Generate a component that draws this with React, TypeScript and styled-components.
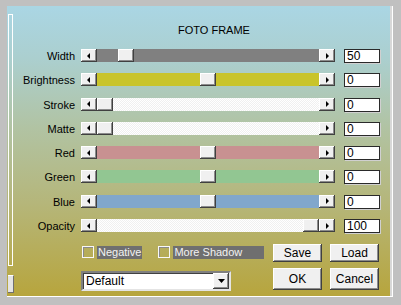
import React from 'react';
import styled, { createGlobalStyle, css } from 'styled-components';

const GlobalStyle = createGlobalStyle`
  html, body {
    margin: 0;
    padding: 0;
    overflow: hidden;
    background: #c0c0c0;
  }
  * {
    box-sizing: border-box;
  }
`;

const raised = css`
  background: #f0f0f0;
  box-shadow: inset -1px -1px 0 #404040, inset 1px 1px 0 #ffffff, inset -2px -2px 0 #8c8c8c;
`;

const Window = styled.div`
  width: 401px;
  height: 305px;
  background: #c0c0c0;
  padding: 6px 8px 8px 7px;
  display: flex;
  font-family: 'Liberation Sans', Arial, sans-serif;
  font-size: 11px;
  color: #000;
`;

const Inner = styled.div`
  flex: 1;
  display: flex;
  background: linear-gradient(to bottom, #aad6e4 0%, #abcfcf 18%, #b1c3a3 42%, #b5b67a 68%, #b7a53d 100%);
  border-right: 1px solid #ffffff;
  border-bottom: 1px solid #ffffff;
  box-shadow: inset -2px 0 0 #d8d8d8;
`;

const Rail = styled.div`
  width: 5px;
  margin-left: 1px;
  display: flex;
  flex-direction: column;
`;

const RailPanel = styled.div`
  margin-top: 8px;
  height: 252px;
  border: 1px solid #ffffff;
`;

const RailBox = styled.div`
  margin-top: 9px;
  height: 18px;
  width: 6px;
  background: #e4e4e4;
  border-top: 1px solid #ffffff;
  border-right: 1px solid #707070;
  border-bottom: 1px solid #707070;
`;

const Main = styled.div`
  flex: 1;
  display: flex;
  flex-direction: column;
  padding-top: 18px;
`;

const Title = styled.div`
  line-height: 13px;
  height: 13px;
  padding-left: 165px;
`;

const Sliders = styled.div`
  margin-top: 12px;
  display: flex;
  flex-direction: column;
  gap: 10.3px;
`;

const Row = styled.div`
  display: flex;
  align-items: flex-start;
  height: 14px;
`;

const Label = styled.div`
  width: 62px;
  text-align: right;
  line-height: 14px;
  white-space: nowrap;
`;

const ScrollBar = styled.div`
  margin-left: 6px;
  width: 254px;
  height: 13px;
  display: flex;
`;

const ArrowButton = styled.div`
  ${raised};
  width: 16px;
  height: 13px;
  flex: none;
  display: flex;
  align-items: center;
  justify-content: center;
`;

const Arrow = styled.div<{ $dir: 'left' | 'right' }>`
  width: 0;
  height: 0;
  border-top: 3px solid transparent;
  border-bottom: 3px solid transparent;
  ${(p) =>
    p.$dir === 'left'
      ? css`border-right: 3px solid #000; margin-right: 1px;`
      : css`border-left: 3px solid #000; margin-left: 1px;`}
`;

const Track = styled.div<{ $fill?: string }>`
  flex: 1;
  height: 13px;
  display: flex;
  ${(p) =>
    p.$fill
      ? css`background: ${p.$fill};`
      : css`background: repeating-conic-gradient(#ffffff 0 25%, #f0f0f0 0 50%) 0 0 / 2px 2px;`}
`;

const Thumb = styled.div`
  ${raised};
  width: 16px;
  height: 13px;
  flex: none;
`;

const ValueBox = styled.div`
  margin-left: 9px;
  width: 36px;
  height: 14px;
  background: #ffffff;
  border: 1px solid #2a2a2a;
  box-shadow: 1px 1px 0 #d0d0d0;
  font-size: 12px;
  line-height: 12px;
  padding-left: 2px;
`;

const Bottom = styled.div`
  margin-top: 11px;
  padding-left: 68px;
  display: grid;
  grid-template-columns: 184px 49px 49px;
  grid-template-rows: 18px 22px;
  column-gap: 8px;
  row-gap: 6px;
`;

const Checks = styled.div`
  display: flex;
  align-items: center;
  padding-left: 1px;
  height: 14px;
  margin-top: 1px;
`;

const Check = styled.div`
  display: flex;
  align-items: center;
  & + & {
    margin-left: 16px;
  }
`;

const Box = styled.div`
  width: 12px;
  height: 12px;
  border: 1px solid #f8f8f8;
  box-shadow: inset 1px 1px 0 #8a8a8a;
`;

const CheckLabel = styled.div<{ $width?: number }>`
  margin-left: 3px;
  height: 13px;
  line-height: 13px;
  padding: 0 1px;
  background: #6f6f6f;
  color: #f2f2f2;
  white-space: nowrap;
  ${(p) => p.$width && css`width: ${p.$width}px;`}
`;

const Button = styled.div`
  ${raised};
  display: flex;
  align-items: center;
  justify-content: center;
  font-size: 12px;
`;

const Combo = styled.div`
  margin-top: 3px;
  width: 150px;
  height: 20px;
  background: #ffffff;
  border: 2px solid;
  border-color: #808080 #e4e4e4 #e4e4e4 #808080;
  box-shadow: inset 1px 1px 0 #404040;
  display: flex;
  align-items: center;
  font-size: 12px;
  padding-left: 3px;
`;

const ComboText = styled.div`
  flex: 1;
`;

const ComboButton = styled.div`
  ${raised};
  width: 16px;
  height: 16px;
  display: flex;
  align-items: center;
  justify-content: center;
`;

type SliderRow = { label: string; value: string; pos: number; fill?: string };

const rows: SliderRow[] = [
  { label: 'Width', value: '50', pos: 21, fill: '#808080' },
  { label: 'Brightness', value: '0', pos: 103, fill: '#c9c42b' },
  { label: 'Stroke', value: '0', pos: 0 },
  { label: 'Matte', value: '0', pos: 0 },
  { label: 'Red', value: '0', pos: 103, fill: '#c89191' },
  { label: 'Green', value: '0', pos: 103, fill: '#92c692' },
  { label: 'Blue', value: '0', pos: 103, fill: '#81a7cb' },
  { label: 'Opacity', value: '100', pos: 206 },
];

export default function App() {
  return (
    <>
      <GlobalStyle />
      <Window>
        <Inner>
          <Rail>
            <RailPanel />
            <RailBox />
          </Rail>
          <Main>
            <Title>FOTO FRAME</Title>
            <Sliders>
              {rows.map((r) => (
                <Row key={r.label}>
                  <Label>{r.label}</Label>
                  <ScrollBar>
                    <ArrowButton>
                      <Arrow $dir="left" />
                    </ArrowButton>
                    <Track $fill={r.fill}>
                      <Thumb style={{ marginLeft: r.pos }} />
                    </Track>
                    <ArrowButton>
                      <Arrow $dir="right" />
                    </ArrowButton>
                  </ScrollBar>
                  <ValueBox>{r.value}</ValueBox>
                </Row>
              ))}
            </Sliders>
            <Bottom>
              <Checks>
                <Check>
                  <Box />
                  <CheckLabel>Negative</CheckLabel>
                </Check>
                <Check>
                  <Box />
                  <CheckLabel $width={91}>More Shadow</CheckLabel>
                </Check>
              </Checks>
              <Button>Save</Button>
              <Button>Load</Button>
              <Combo>
                <ComboText>Default</ComboText>
                <ComboButton>
                  <svg width="7" height="4" viewBox="0 0 7 4">
                    <polygon points="0,0 7,0 3.5,4" fill="#000" />
                  </svg>
                </ComboButton>
              </Combo>
              <Button>OK</Button>
              <Button>Cancel</Button>
            </Bottom>
          </Main>
        </Inner>
      </Window>
    </>
  );
}
